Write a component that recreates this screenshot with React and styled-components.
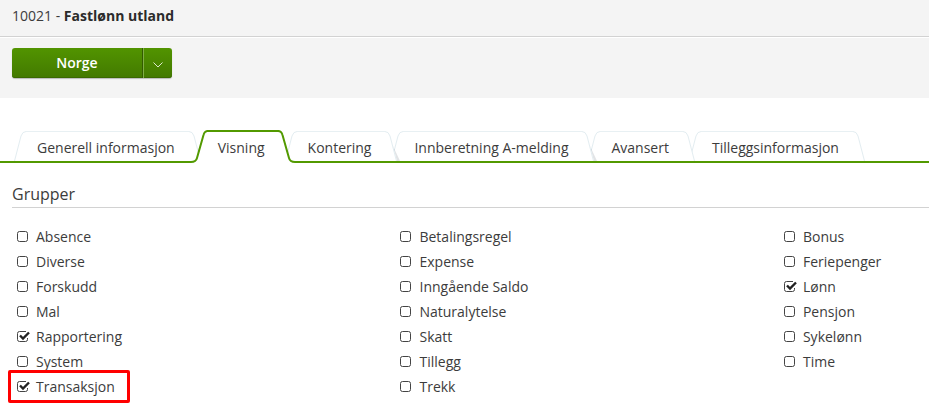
import React, { useState } from "react";
import styled, { createGlobalStyle } from "styled-components";

const GlobalStyle = createGlobalStyle`
  * {
    box-sizing: border-box;
  }
  body {
    margin: 0;
    background: #fff;
    color: #3c3c3c;
    font-family: "Open Sans", "Noto Sans", sans-serif;
    font-size: 14px;
    line-height: 20px;
  }
  button {
    font: inherit;
    color: inherit;
    cursor: pointer;
  }
`;

const Header = styled.header`
  background: #f4f4f4;
`;

const PageTitle = styled.h1`
  margin: 0;
  padding: 6px 12px 10px;
  border-bottom: 1px solid #d2d2d2;
  font-size: 14px;
  font-weight: 400;
  line-height: 20px;
  strong {
    color: #2b2b2b;
  }
`;

const Toolbar = styled.div`
  display: flex;
  padding: 10px 12px 20px;
  border-top: 1px solid #fff;
`;

const SplitButton = styled.div`
  display: flex;
  height: 30px;
  border-radius: 3px;
  overflow: hidden;
  background: linear-gradient(#529400, #437900);
  box-shadow: inset 0 -1px #3a6900, 0 1px 1px #bbb;
`;

const MainAction = styled.button`
  width: 130px;
  padding: 0;
  border: 0;
  background: none;
  color: #fff;
  font-weight: 600;
`;

const DropAction = styled.button`
  display: flex;
  align-items: center;
  justify-content: center;
  width: 30px;
  padding: 4px 0 0;
  border: 0;
  border-left: 1px solid #335c00;
  background: none;
  box-shadow: inset 1px 0 #7fae45;
`;

const Tabs = styled.div`
  display: flex;
  margin-top: 32px;
  padding-left: 14px;
  height: 33px;
  border-bottom: 2px solid #529900;
`;

const TabButton = styled.button`
  position: relative;
  z-index: ${(props) => props.$layer};
  display: flex;
  flex: none;
  height: 33px;
  margin-right: -6px;
  padding: 0;
  border: 0;
  background: none;
  svg {
    flex: none;
    display: block;
  }
`;

const TabLabel = styled.span`
  height: ${(props) => (props.$active ? 33 : 30)}px;
  margin-top: ${(props) => (props.$active ? 0 : 1)}px;
  padding: 6px 14px 0 11px;
  border-top: ${(props) => (props.$active ? "2px solid #529900" : "1px solid #e8f0f3")};
  background: #fff;
  white-space: nowrap;
`;

const Content = styled.main`
  padding: 20px 0 16px 12px;
`;

const SectionTitle = styled.h2`
  margin: 0;
  padding-bottom: 2px;
  border-bottom: 1px solid #d2d2d2;
  font-size: 16px;
  font-weight: 400;
  line-height: 22px;
`;

const Groups = styled.div`
  display: grid;
  grid-template-columns: 23fr 23fr 9fr;
  padding-top: 16px;
`;

const Option = styled.label`
  position: relative;
  display: flex;
  align-items: center;
  width: fit-content;
  height: 25px;
  padding: 0 5px;
  cursor: pointer;
`;

const Marker = styled.span`
  position: absolute;
  inset: -4px -10px -4px -4px;
  border: 3px solid #f00;
  border-radius: 2px;
  pointer-events: none;
`;

const Check = styled.input`
  appearance: none;
  width: 14px;
  height: 11px;
  margin: 0 5px 0 0;
  background: url("data:image/svg+xml,%3Csvg xmlns='http://www.w3.org/2000/svg' width='14' height='11'%3E%3Crect x='.5' y='.5' width='10' height='10' rx='2' fill='none' stroke='%23444'/%3E%3C/svg%3E") no-repeat;
  &:checked {
    background-image: url("data:image/svg+xml,%3Csvg xmlns='http://www.w3.org/2000/svg' width='14' height='11'%3E%3Cpath d='M10.5 7v1.5a2 2 0 0 1-2 2h-6a2 2 0 0 1-2-2v-6a2 2 0 0 1 2-2h6.5' fill='none' stroke='%23444'/%3E%3Cpath d='M3 4.5l3 3 6-6' fill='none' stroke='%23222' stroke-width='2.4'/%3E%3C/svg%3E");
  }
`;

const tabs = [
  "Generell informasjon",
  "Visning",
  "Kontering",
  "Innberetning A-melding",
  "Avansert",
  "Tilleggsinformasjon",
];

const columns = [
  ["Absence", "Diverse", "Forskudd", "Mal", "Rapportering", "System", "Transaksjon"],
  ["Betalingsregel", "Expense", "Inngående Saldo", "Naturalytelse", "Skatt", "Tillegg", "Trekk"],
  ["Bonus", "Feriepenger", "Lønn", "Pensjon", "Sykelønn", "Time"],
];

const LEFT_EDGE = "M0.5 31L7 6Q8.5 1.5 12 1.5";
const ACTIVE_LEFT_EDGE = "M-4 32Q1 32 2 28L8.5 5Q9.5 1 13 1";

function TabEdge({ active, flip, shadow }) {
  return (
    <svg
      width="12"
      height="33"
      overflow="visible"
      style={flip ? { transform: "scaleX(-1)" } : undefined}
      aria-hidden="true"
    >
      {active ? (
        <>
          <path d={`${ACTIVE_LEFT_EDGE}V33H-4Z`} fill="#fff" />
          <path d={ACTIVE_LEFT_EDGE} fill="none" stroke="#529900" strokeWidth="2" />
        </>
      ) : (
        <>
          {shadow && <path d="M4 16L0 31H-3Z" fill="#8a949a" opacity="0.25" />}
          <path d={`${LEFT_EDGE}V31Z`} fill="#fff" />
          <path d={LEFT_EDGE} fill="none" stroke="#e3edf1" />
        </>
      )}
    </svg>
  );
}

function Tab({ label, active, layer, shadow, onSelect }) {
  return (
    <TabButton role="tab" aria-selected={active} $layer={layer} onClick={onSelect}>
      <TabEdge active={active} />
      <TabLabel $active={active}>{label}</TabLabel>
      <TabEdge active={active} shadow={shadow} flip />
    </TabButton>
  );
}

export default function App() {
  const [activeTab, setActiveTab] = useState("Visning");
  return (
    <>
      <GlobalStyle />
      <Header>
        <PageTitle>
          10021 - <strong>Fastlønn utland</strong>
        </PageTitle>
        <Toolbar>
          <SplitButton>
            <MainAction>Norge</MainAction>
            <DropAction aria-label="Velg land">
              <svg width="10" height="6" fill="none" stroke="#dce9cc">
                <path d="M0.5 0.5L5 5L9.5 0.5" />
              </svg>
            </DropAction>
          </SplitButton>
        </Toolbar>
      </Header>
      <Tabs role="tablist">
        {tabs.map((label, i) => (
          <Tab
            key={label}
            label={label}
            active={label === activeTab}
            layer={label === activeTab ? 10 : tabs.length - i}
            shadow={i < tabs.length - 2}
            onSelect={() => setActiveTab(label)}
          />
        ))}
      </Tabs>
      <Content>
        <SectionTitle>Grupper</SectionTitle>
        <Groups>
          {columns.map((names) => (
            <div key={names[0]}>
              {names.map((name) => (
                <Option key={name}>
                  <Check
                    type="checkbox"
                    defaultChecked={["Rapportering", "Transaksjon", "Lønn"].includes(name)}
                  />
                  {name}
                  {name === "Transaksjon" && <Marker />}
                </Option>
              ))}
            </div>
          ))}
        </Groups>
      </Content>
    </>
  );
}
